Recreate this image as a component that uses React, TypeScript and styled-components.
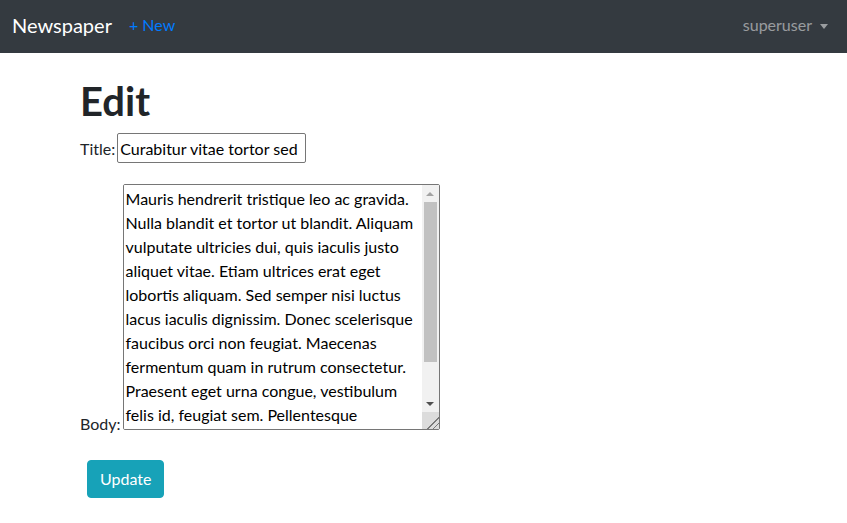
import React from 'react'
import styled, { createGlobalStyle } from 'styled-components'

const GlobalStyle = createGlobalStyle`
  html, body {
    margin: 0;
    padding: 0;
  }
  body {
    font-family: Lato, "Noto Sans", sans-serif;
    font-size: 16px;
    line-height: 1.5;
    color: #212529;
    background: #fff;
  }
`

const Navbar = styled.nav`
  height: 53px;
  background: #343a40;
  display: flex;
  align-items: center;
  padding: 0 19px 3px 12px;
  box-sizing: border-box;
`

const Brand = styled.a`
  color: #fff;
  font-size: 20px;
  line-height: 30px;
  text-decoration: none;
  margin-right: 17px;
`

const NavLink = styled.a<{ $muted?: boolean }>`
  color: ${(p) => (p.$muted ? 'rgba(255, 255, 255, 0.5)' : '#007bff')};
  font-size: 16px;
  text-decoration: none;
  display: flex;
  align-items: center;
  gap: 8px;
`

const Spacer = styled.div`
  flex: 1;
`

const Caret = styled.span`
  display: inline-block;
  width: 0;
  height: 0;
  border-top: 5px solid rgba(255, 255, 255, 0.5);
  border-left: 4px solid transparent;
  border-right: 4px solid transparent;
  margin-top: 2px;
`

const Container = styled.main`
  padding: 24px 80px 0;
`

const Heading = styled.h1`
  font-size: 40px;
  font-weight: 700;
  line-height: 1.2;
  margin: 0 0 8px;
`

const Field = styled.p<{ $gap?: number }>`
  margin: 0 0 16px;
  padding-top: ${(p) => p.$gap ?? 0}px;
`

const Label = styled.label`
  margin-right: 2px;
`

const TextInput = styled.input`
  font: inherit;
  line-height: 24px;
  width: 189px;
  height: 30px;
  box-sizing: border-box;
  padding: 1px 2px;
  border: 1px solid #767676;
  border-radius: 2px;
  color: #000;
`

// wrapper keeps the textarea bottom on the label's baseline
const AreaWrap = styled.span`
  position: relative;
  display: inline-block;
  line-height: 0;
  vertical-align: baseline;
`

const TextArea = styled.textarea`
  font: inherit;
  line-height: 24px;
  width: 317px;
  height: 246px;
  box-sizing: border-box;
  padding: 2px 23px 2px 2px;
  border: 1px solid #767676;
  border-radius: 2px;
  color: #000;
  vertical-align: baseline;
  margin: 0;
  resize: none;
  overflow-y: auto;
  scrollbar-width: none;
`

// drawn scrollbar, sits over the textarea's right edge
const ScrollBar = styled.div`
  position: absolute;
  top: 1px;
  right: 1px;
  bottom: 1px;
  width: 17px;
  display: flex;
  flex-direction: column;
  background: #f1f1f1;
  pointer-events: none;
`

const ArrowButton = styled.div<{ $dir: 'up' | 'down'; $disabled?: boolean }>`
  height: 17px;
  display: flex;
  align-items: center;
  justify-content: center;

  &::before {
    content: '';
    width: 0;
    height: 0;
    border-left: 4px solid transparent;
    border-right: 4px solid transparent;
    ${(p) =>
      p.$dir === 'up'
        ? `border-bottom: 4px solid ${p.$disabled ? '#a3a3a3' : '#505050'};`
        : `border-top: 4px solid ${p.$disabled ? '#a3a3a3' : '#505050'};`}
  }
`

const Track = styled.div`
  flex: 1;
  padding: 0 2px;
`

const Thumb = styled.div`
  height: 160px;
  background: #c1c1c1;
`

const Resizer = styled.div`
  height: 17px;
  background:
    linear-gradient(135deg, transparent 64%, #7a7a7a 64%, #7a7a7a 69%, transparent 69%,
      transparent 80%, #7a7a7a 80%, #7a7a7a 85%, transparent 85%),
    #dcdcdc;
`

const Button = styled.button`
  font: inherit;
  color: #fff;
  background: #17a2b8;
  border: 1px solid #17a2b8;
  border-radius: 4px;
  padding: 6px 12px;
  line-height: 24px;
  margin: 8px 0 0 7px;
  cursor: pointer;
`

const body =
  'Mauris hendrerit tristique leo ac gravida. Nulla blandit et tortor ut blandit. Aliquam vulputate ultricies dui, quis iaculis justo aliquet vitae. Etiam ultrices erat eget lobortis aliquam. Sed semper nisi luctus lacus iaculis dignissim. Donec scelerisque faucibus orci non feugiat. Maecenas fermentum quam in rutrum consectetur. Praesent eget urna congue, vestibulum felis id, feugiat sem. Pellentesque habitant morbi tristique senectus et netus et malesuada fames ac turpis egestas.'

export default function App() {
  return (
    <>
      <GlobalStyle />
      <Navbar>
        <Brand href="#">Newspaper</Brand>
        <NavLink href="#">+ New</NavLink>
        <Spacer />
        <NavLink href="#" $muted>
          superuser <Caret />
        </NavLink>
      </Navbar>
      <Container>
        <Heading>Edit</Heading>
        <form onSubmit={(e) => e.preventDefault()}>
          <Field>
            <Label htmlFor="id_title">Title:</Label>
            <TextInput id="id_title" type="text" defaultValue="Curabitur vitae tortor sed" />
          </Field>
          <Field $gap={5}>
            <Label htmlFor="id_body">Body:</Label>
            <AreaWrap>
              <TextArea id="id_body" defaultValue={body} />
              <ScrollBar>
                <ArrowButton $dir="up" $disabled />
                <Track>
                  <Thumb />
                </Track>
                <ArrowButton $dir="down" />
                <Resizer />
              </ScrollBar>
            </AreaWrap>
          </Field>
          <Button type="submit">Update</Button>
        </form>
      </Container>
    </>
  )
}
